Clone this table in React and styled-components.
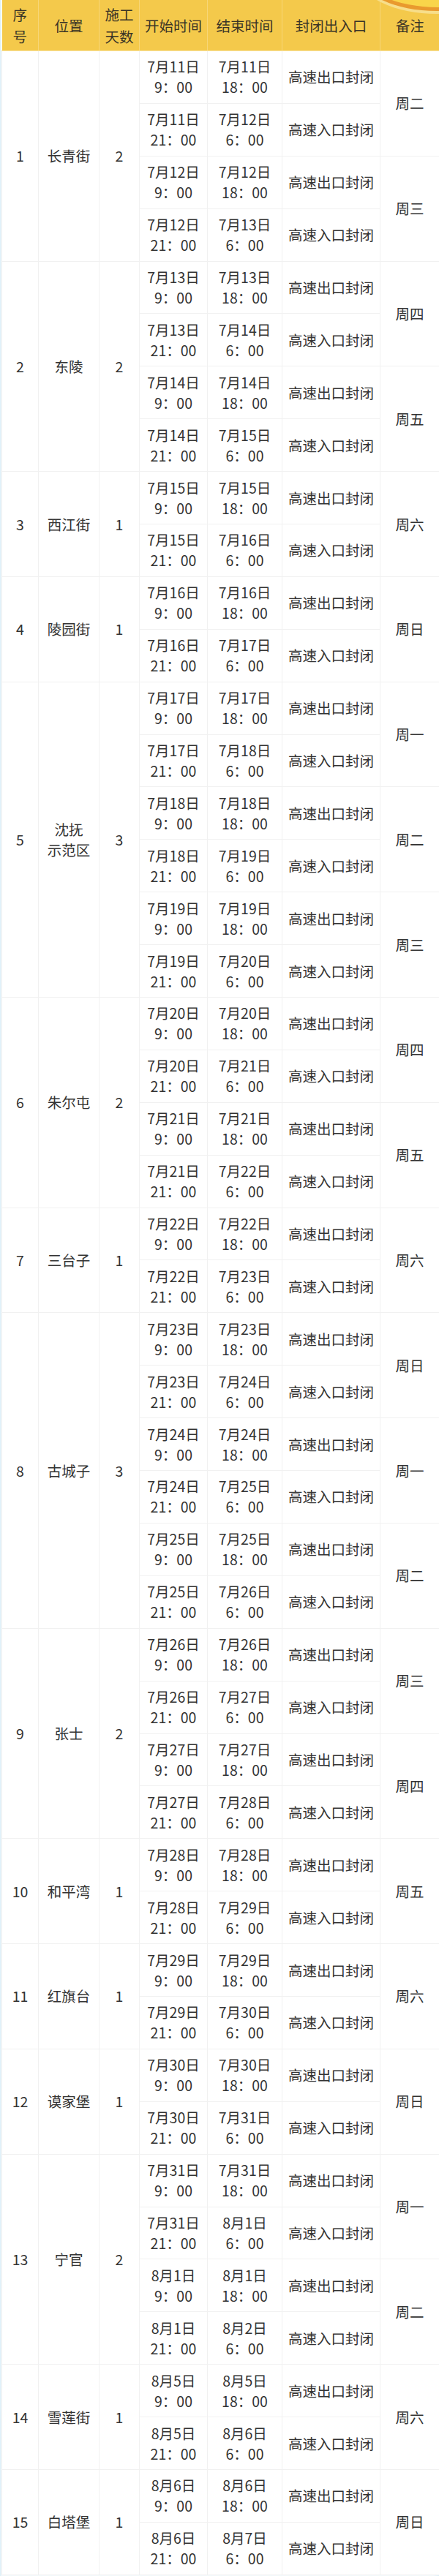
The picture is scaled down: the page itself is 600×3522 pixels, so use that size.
import React from 'react';
import styled, {createGlobalStyle} from "styled-components";

const GlobalStyle = createGlobalStyle`
  html, body {
    margin: 0;
    padding: 0;
    background: #ffffff;
  }
  body {
    font-family: "Noto Sans CJK SC", "Noto Sans", sans-serif;
  }
`

const Page = styled.div`
  position: relative;
  width: 600px;
  height: 3522px;
  overflow: hidden;
  padding: 0 4px 0 2px;
  box-sizing: border-box;
  background: linear-gradient(to right, #d9edf7 0, #f3f9fc 2px, #f3f9fc 592px, #dceef8 600px);
`

const Coin = styled.svg`
  position: absolute;
  top: 0;
  right: 0;
  width: 110px;
  height: 24px;
`

const Table = styled.table`
  width: 100%;
  border-collapse: collapse;
  table-layout: fixed;
  background: #ffffff;
  color: #333333;
  font-size: 19.5px;
  line-height: 28px;
`

const HeadCell = styled.th`
  height: 69px;
  padding: 0;
  background: #f4c94b;
  color: #3a3426;
  font-weight: normal;
  text-align: center;
  vertical-align: middle;
  line-height: 30px;
  border-left: 1px solid #f7d677;
  border-bottom: 1px solid #f8e2a0;
  &:first-child {
    border-left: none;
  }
`

const Cell = styled.td`
  height: 70.9px;
  padding: 0;
  text-align: center;
  vertical-align: middle;
  border: 1px solid #f1f1f1;
  white-space: nowrap;
`

const columns = [50, 83, 55, 93, 102, 134, 81]

const weekdays = ["周日", "周一", "周二", "周三", "周四", "周五", "周六"]

const groups = [
    {name: "长青街", start: [7, 11], days: 2},
    {name: "东陵", start: [7, 13], days: 2},
    {name: "西江街", start: [7, 15], days: 1},
    {name: "陵园街", start: [7, 16], days: 1},
    {name: "沈抚\n示范区", start: [7, 17], days: 3},
    {name: "朱尔屯", start: [7, 20], days: 2},
    {name: "三台子", start: [7, 22], days: 1},
    {name: "古城子", start: [7, 23], days: 3},
    {name: "张士", start: [7, 26], days: 2},
    {name: "和平湾", start: [7, 28], days: 1},
    {name: "红旗台", start: [7, 29], days: 1},
    {name: "谟家堡", start: [7, 30], days: 1},
    {name: "宁官", start: [7, 31], days: 2},
    {name: "雪莲街", start: [8, 5], days: 1},
    {name: "白塔堡", start: [8, 6], days: 1},
]

// 2023年
const shift = (m, d, n) => {
    const date = new Date(2023, m - 1, d + n)
    return [date.getMonth() + 1, date.getDate(), date.getDay()]
}

const Stamp = ({date, time}) => (
    <>
        {date[0]}月{date[1]}日<br/>{time}
    </>
)

const Multiline = ({text}) => text.split("\n").map((line, i) => (
    <React.Fragment key={i}>{i > 0 && <br/>}{line}</React.Fragment>
))

const App = () => {
    const rows = []
    groups.forEach((g, gi) => {
        for (let k = 0; k < g.days; k++) {
            const day = shift(g.start[0], g.start[1], k)
            const next = shift(g.start[0], g.start[1], k + 1)
            rows.push(
                <tr key={`${gi}-${k}-a`}>
                    {k === 0 && (
                        <>
                            <Cell rowSpan={g.days * 2}>{gi + 1}</Cell>
                            <Cell rowSpan={g.days * 2}><Multiline text={g.name}/></Cell>
                            <Cell rowSpan={g.days * 2}>{g.days}</Cell>
                        </>
                    )}
                    <Cell><Stamp date={day} time="9：00"/></Cell>
                    <Cell><Stamp date={day} time="18：00"/></Cell>
                    <Cell>高速出口封闭</Cell>
                    <Cell rowSpan={2}>{weekdays[day[2]]}</Cell>
                </tr>
            )
            rows.push(
                <tr key={`${gi}-${k}-b`}>
                    <Cell><Stamp date={day} time="21：00"/></Cell>
                    <Cell><Stamp date={next} time="6：00"/></Cell>
                    <Cell>高速入口封闭</Cell>
                </tr>
            )
        }
    })

    return (
        <Page>
            <GlobalStyle/>
            <Table>
                <colgroup>
                    {columns.map((w, i) => <col key={i} style={{width: w}}/>)}
                </colgroup>
                <thead>
                <tr>
                    <HeadCell>序<br/>号</HeadCell>
                    <HeadCell>位置</HeadCell>
                    <HeadCell>施工<br/>天数</HeadCell>
                    <HeadCell>开始时间</HeadCell>
                    <HeadCell>结束时间</HeadCell>
                    <HeadCell>封闭出入口</HeadCell>
                    <HeadCell>备注</HeadCell>
                </tr>
                </thead>
                <tbody>{rows}</tbody>
            </Table>
            <Coin viewBox="490 0 110 24">
                <ellipse cx="597" cy="-33" rx="106" ry="52" fill="#f7de8a"/>
                <ellipse cx="597" cy="-35" rx="105" ry="50" fill="#e99a2e"/>
                <ellipse cx="598" cy="-38" rx="102" ry="48" fill="#f9d54a"/>
            </Coin>
        </Page>
    );
};

export default App;
